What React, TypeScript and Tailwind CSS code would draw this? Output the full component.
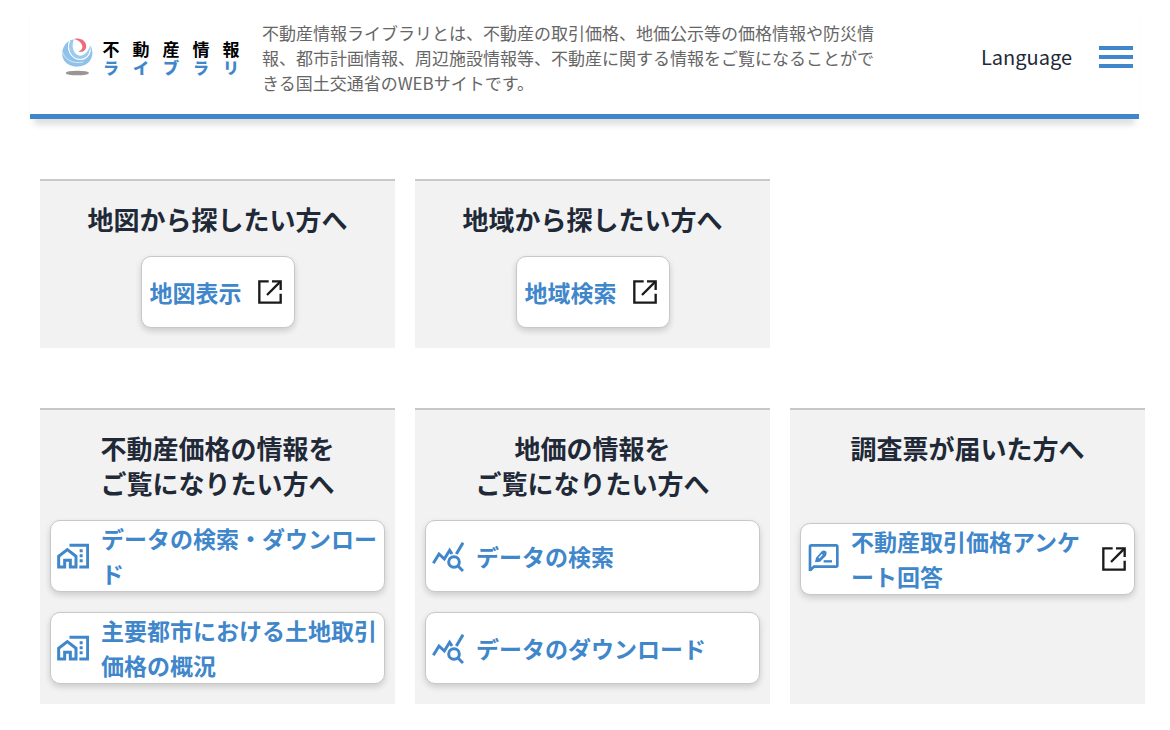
import React from 'react';

type IconName = 'home' | 'stats' | 'review';

interface CardLink {
  label: string;
  icon?: IconName;
  external?: boolean;
}

interface Card {
  title: string[];
  links: CardLink[];
  compact?: boolean;
}

const searchCards: Card[] = [
  { title: ['地図から探したい方へ'], links: [{ label: '地図表示', external: true }], compact: true },
  { title: ['地域から探したい方へ'], links: [{ label: '地域検索', external: true }], compact: true },
];

const dataCards: Card[] = [
  {
    title: ['不動産価格の情報を', 'ご覧になりたい方へ'],
    links: [
      { label: 'データの検索・ダウンロード', icon: 'home' },
      { label: '主要都市における土地取引価格の概況', icon: 'home' },
    ],
  },
  {
    title: ['地価の情報を', 'ご覧になりたい方へ'],
    links: [
      { label: 'データの検索', icon: 'stats' },
      { label: 'データのダウンロード', icon: 'stats' },
    ],
  },
  {
    title: ['調査票が届いた方へ'],
    links: [{ label: '不動産取引価格アンケート回答', icon: 'review', external: true }],
  },
];

const LogoMark = () => (
  <svg viewBox="0 0 102 114" className="h-[38px] w-[34px] shrink-0" aria-hidden="true">
    <path d="M28 8C-4 28 -3 84 50 86C92 86 108 48 90 22C96 50 82 64 62 65C34 64 18 38 28 8Z" fill="#8fc1ea" />
    <path d="M30 7C20 34 34 64 62 63C84 60 92 44 89 24C84 42 74 53 60 53C42 51 32 28 42 4Z" fill="#9ccbef" />
    <path d="M29 7C18 36 34 66 62 65C78 64 90 52 91 36" fill="none" stroke="#fff" strokeWidth="3" />
    <path d="M5 36C12 62 36 80 70 72" fill="none" stroke="#d9ebf9" strokeWidth="3" />
    <path d="M42 3C66 -3 82 14 78 29C75 40 65 44 55 40C66 38 70 28 65 19C60 10 52 5 42 3Z" fill="#ec6b78" />
    <ellipse cx="52" cy="105" rx="35" ry="7" fill="#999594" />
  </svg>
);

const ICONS: Record<IconName, React.ReactNode> = {
  home: (
    <g strokeWidth="9">
      <path d="M5 84V52L31 32L57 52V84H40V64H23V84Z" />
      <path d="M42 23V19H92V84H67" />
      <path d="M68 31h9v9h-9zM68 46h9v9h-9zM68 61h9v9h-9z" fill="currentColor" stroke="none" />
    </g>
  ),
  stats: (
    <g strokeWidth="9">
      <path d="M4 73L21 45L37 60L53 34L60 45" />
      <path d="M73 45L93 11" />
      <circle cx="66" cy="69" r="16" />
      <path d="M78 81L93 96" />
    </g>
  ),
  review: (
    <g strokeWidth="8">
      <path d="M9 87V14Q9 10 13 10H87Q91 10 91 14V70Q91 74 87 74H21L9 86Z" />
      <path d="M24 61L27 47L45 27Q50 23 57 28Q62 35 57 41L39 59Z" fill="currentColor" stroke="none" />
      <path d="M36 48L46 37" stroke="#fff" strokeWidth="4" />
      <path d="M50 58H75" strokeWidth="7" />
    </g>
  ),
};

const LinkIcon = ({ name }: { name: IconName }) => (
  <svg viewBox="0 0 96 102" className="h-[34px] w-8 shrink-0" fill="none" stroke="currentColor" aria-hidden="true">
    {ICONS[name]}
  </svg>
);

const ExternalIcon = () => (
  <svg viewBox="0 0 72 72" className="size-6 shrink-0 text-[#1a1a1a]" fill="none" stroke="currentColor" strokeWidth="7" aria-hidden="true">
    <path d="M32 4H4V68H68V41" />
    <path d="M42 4H68V30" />
    <path d="M67 5L27 45" />
  </svg>
);

const linkPadding = (card: Card, link: CardLink) => {
  if (card.compact) return 'gap-4 pr-3 pl-2';
  return link.external ? 'w-full gap-3 pr-2 pl-1.5' : 'w-full gap-3 pr-1 pl-1.5';
};

const ServiceCard = ({ card }: { card: Card }) => (
  <section className="flex flex-col items-center border-t-2 border-[#c8c8c8] bg-[#f2f2f2] px-2.5 py-5">
    <h2
      className={`text-center text-[26px] leading-[35px] font-bold text-[#1f2937] ${
        card.compact || card.title.length > 1 ? '' : 'min-h-[73px]'
      }`}
    >
      {card.title.map((line) => (
        <span key={line} className="block">{line}</span>
      ))}
    </h2>
    {card.links.map((link) => (
      <a
        key={link.label}
        href="#"
        className={`mt-5 flex h-[72px] items-center rounded-[10px] border border-[#c8c8c8] bg-white text-[#3f87ca] shadow-[0_3px_6px_rgba(0,0,0,0.16)] ${linkPadding(card, link)}`}
      >
        {link.icon && <LinkIcon name={link.icon} />}
        <span className={`text-[23px] leading-[35px] font-bold ${card.compact ? '' : 'flex-1'}`}>{link.label}</span>
        {link.external && <ExternalIcon />}
      </a>
    ))}
  </section>
);

const App = () => {
  return (
    <div lang="ja" className="bg-white pb-6 font-['Noto_Sans_CJK_JP',sans-serif]">
      <header className="mr-[31px] ml-[30px] flex h-[119px] items-center border-b-[5px] border-[#3f87ca] bg-white pr-1.5 pl-[30px] shadow-[0_10px_6px_-4px_rgba(0,0,0,0.12)]">
        <a href="#" className="flex shrink-0 items-center gap-2" aria-label="不動産情報ライブラリ">
          <LogoMark />
          <span className="grid grid-cols-[repeat(5,18px)] gap-x-3 pt-0.5 text-center font-bold">
            {'不動産情報'.split('').map((char) => (
              <span key={char} className="text-[17px] leading-[19px] text-black">{char}</span>
            ))}
            {'ライブラリ'.split('').map((char, i) => (
              <span key={i} className="text-base leading-[19px] font-black text-[#3f87ca]">{char}</span>
            ))}
          </span>
        </a>
        <p className="ml-[22px] max-w-[622px] text-[17px] leading-[25px] text-[#666]">
          不動産情報ライブラリとは、不動産の取引価格、地価公示等の価格情報や防災情報、都市計画情報、周辺施設情報等、不動産に関する情報をご覧になることができる国土交通省のWEBサイトです。
        </p>
        <div className="ml-auto flex shrink-0 items-center gap-[27px]">
          <button type="button" className="text-xl leading-8 text-[#1f2937]">Language</button>
          <button type="button" aria-label="メニュー" className="flex w-[34px] flex-col gap-[5px]">
            <span className="h-1 w-full bg-[#3f87ca]" />
            <span className="h-1 w-full bg-[#3f87ca]" />
            <span className="h-1 w-full bg-[#3f87ca]" />
          </button>
        </div>
      </header>

      <main className="mt-[60px] flex flex-col gap-[60px] pr-[25px] pl-10">
        <div className="grid grid-cols-3 gap-5">
          {searchCards.map((card) => (
            <ServiceCard key={card.title[0]} card={card} />
          ))}
        </div>
        <div className="grid grid-cols-3 gap-5">
          {dataCards.map((card) => (
            <ServiceCard key={card.title[0]} card={card} />
          ))}
        </div>
      </main>
    </div>
  );
};

export default App;
